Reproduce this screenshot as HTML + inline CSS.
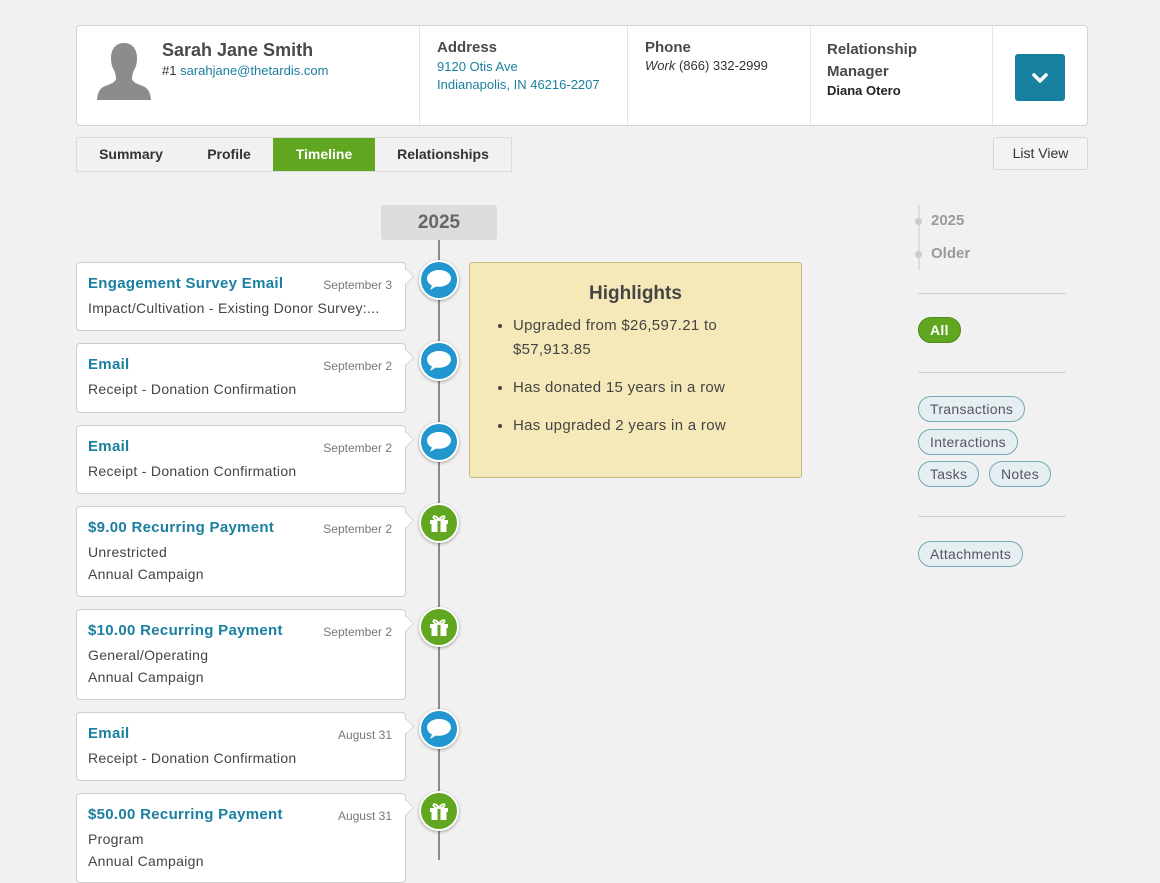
<!DOCTYPE html>
<html><head><meta charset="utf-8"><style>
*{box-sizing:border-box;margin:0;padding:0}
body{width:1160px;height:860px;overflow:hidden;background:#f1f1f1;font-family:"Liberation Sans",sans-serif;color:#444;position:relative}
.a{position:absolute}
.hdr{left:76px;top:25px;width:1012px;height:101px;background:#fff;border:1px solid #d4d4d4;border-radius:4px}
.col{position:absolute;top:0;height:99px;border-left:1px solid #e6e6e6}
.lbl{font-size:15px;font-weight:bold;color:#4a4a4a}
.link{color:#1a7fa0;font-size:13px}
.tabs{left:76px;top:137px;height:35px;border:1px solid #dcdcdc;background:#f1f1f1;display:flex}
.tab{font-size:14px;font-weight:bold;color:#333;line-height:33px;text-align:center}
.card{position:absolute;left:76px;width:330px;background:#fff;border:1px solid #cfcfcf;border-radius:4px;padding:12px 11px;letter-spacing:.3px}
.card:after{content:"";position:absolute;right:-7px;top:8px;width:10px;height:10px;background:#fff;border-top:1px solid #d6d6d6;border-right:1px solid #d6d6d6;transform:rotate(45deg)}
.ct{color:#1a7fa0;font-weight:bold;font-size:15px}
.cd{position:absolute;right:13px;top:15px;font-size:12px;color:#777;letter-spacing:0}
.cs{font-size:14px;color:#444;margin-top:5px;line-height:22px}
.cs2{font-size:14px;color:#444;line-height:22px}
.ic{position:absolute;left:419px;width:40px;height:40px;border-radius:50%;border:2px solid #fff;box-shadow:0 1px 3px rgba(0,0,0,.35);display:flex;align-items:center;justify-content:center}
.bl{background:#2297cf}.gr{background:#61a621}
.pill{position:absolute;height:26px;border:1px solid #74a9b8;border-radius:13px;background:#e6eef2;color:#556;font-size:14px;line-height:24px;padding:0 11px;letter-spacing:.3px}
.hr{position:absolute;left:918px;width:148px;border-top:1px solid #cfcfcf}
</style></head><body>
<div class="a hdr">
 <svg class="a" style="left:20px;top:15px" width="54" height="59" viewBox="0 0 54 59"><path d="M27 2c-9 0-13 7-13 15 0 5 1 9 3 12 1 3 2 5 2 8 0 3-3 5-8 7-6 2-10 4-11 15h54c-1-11-5-13-11-15-5-2-8-4-8-7 0-3 1-5 2-8 2-3 3-7 3-12 0-8-4-15-13-15z" fill="#8c8c8c"/></svg>
 <div class="a" style="left:85px;top:14px;font-size:18px;font-weight:bold;color:#4a4a4a">Sarah Jane Smith</div>
 <div class="a" style="left:85px;top:37px;font-size:13px;color:#333">#1 <span class="link">sarahjane@thetardis.com</span></div>
 <div class="col" style="left:342px;width:208px;padding:13px 17px"><div class="lbl">Address</div><div class="link" style="margin-top:2px;line-height:18px">9120 Otis Ave<br>Indianapolis, IN 46216-2207</div></div>
 <div class="col" style="left:550px;width:183px;padding:13px 17px"><div class="lbl">Phone</div><div style="font-size:13px;color:#333;margin-top:2px"><i>Work</i> (866) 332-2999</div></div>
 <div class="col" style="left:733px;width:182px;padding:13px 16px"><div class="lbl" style="line-height:22px">Relationship<br>Manager</div><div style="font-size:13px;font-weight:bold;color:#222">Diana Otero</div></div>
 <div class="col" style="left:915px;width:96px"></div>
 <div class="a" style="left:938px;top:28px;width:50px;height:47px;background:#17809f;border-radius:3px"><svg width="50" height="47"><path d="M19 21l6 6 6-6" stroke="#fff" stroke-width="3.5" fill="none" stroke-linecap="round" stroke-linejoin="round"/></svg></div>
</div>
<div class="a tabs"><div class="tab" style="width:108px">Summary</div><div class="tab" style="width:88px">Profile</div><div class="tab" style="width:102px;background:#61a621;color:#fff">Timeline</div><div class="tab" style="width:136px">Relationships</div></div>
<div class="a" style="left:993px;top:137px;width:95px;height:33px;border:1px solid #d6d6d6;border-radius:3px;background:#f3f3f3;font-size:14px;color:#333;text-align:center;line-height:31px">List View</div>

<div class="a" style="left:438px;top:238px;width:2px;height:622px;background:#8a8a8a"></div>
<div class="a" style="left:381px;top:205px;width:116px;height:35px;background:#dcdcdc;border-radius:3px;font-size:19px;font-weight:bold;color:#666;text-align:center;line-height:35px">2025</div>

<div class="card" style="top:262px;height:69px"><div class="ct">Engagement Survey Email</div><div class="cd">September 3</div><div class="cs">Impact/Cultivation - Existing Donor Survey:...</div></div>
<div class="card" style="top:343px;height:70px"><div class="ct">Email</div><div class="cd">September 2</div><div class="cs">Receipt - Donation Confirmation</div></div>
<div class="card" style="top:425px;height:69px"><div class="ct">Email</div><div class="cd">September 2</div><div class="cs">Receipt - Donation Confirmation</div></div>
<div class="card" style="top:506px;height:91px"><div class="ct">$9.00 Recurring Payment</div><div class="cd">September 2</div><div class="cs">Unrestricted</div><div class="cs2">Annual Campaign</div></div>
<div class="card" style="top:609px;height:91px"><div class="ct">$10.00 Recurring Payment</div><div class="cd">September 2</div><div class="cs">General/Operating</div><div class="cs2">Annual Campaign</div></div>
<div class="card" style="top:712px;height:69px"><div class="ct">Email</div><div class="cd">August 31</div><div class="cs">Receipt - Donation Confirmation</div></div>
<div class="card" style="top:793px;height:90px"><div class="ct">$50.00 Recurring Payment</div><div class="cd">August 31</div><div class="cs">Program</div><div class="cs2">Annual Campaign</div></div>

<svg width="0" height="0" style="position:absolute"><defs>
<symbol id="b" viewBox="0 0 28 24"><path d="M14 2C7 2 2 6 2 10.5c0 3 2 5.5 5 7l-2 4.5 6-3.5c1 .2 2 .3 3 .3 7 0 12-4 12-8.5S21 2 14 2z" fill="#fff"/></symbol>
<symbol id="g" viewBox="0 0 24 24"><path d="M3 9h18v4H3zM4.5 13h15v8h-15z" fill="#fff"/><rect x="10.5" y="9" width="3" height="12" fill="#61a621"/><path d="M12 9C10 5 6 4 6.5 6.5 7 8.5 10 9 12 9zM12 9c2-4 6-5 5.5-2.5C17 8.5 14 9 12 9z" fill="none" stroke="#fff" stroke-width="1.8"/></symbol>
</defs></svg>
<div class="ic bl" style="top:260px"><svg width="28" height="24"><use href="#b"/></svg></div>
<div class="ic bl" style="top:341px"><svg width="28" height="24"><use href="#b"/></svg></div>
<div class="ic bl" style="top:422px"><svg width="28" height="24"><use href="#b"/></svg></div>
<div class="ic gr" style="top:503px"><svg width="24" height="24"><use href="#g"/></svg></div>
<div class="ic gr" style="top:607px"><svg width="24" height="24"><use href="#g"/></svg></div>
<div class="ic bl" style="top:709px"><svg width="28" height="24"><use href="#b"/></svg></div>
<div class="ic gr" style="top:791px"><svg width="24" height="24"><use href="#g"/></svg></div>

<div class="a" style="left:469px;top:262px;width:333px;height:216px;background:#f5e9b9;border:1px solid #c9bb85;border-radius:3px">
 <div style="text-align:center;font-size:19px;font-weight:bold;color:#444;margin-top:20px">Highlights</div>
 <ul style="margin:9px 0 0 43px;width:240px;font-size:15px;color:#444;line-height:24px;letter-spacing:.3px">
  <li>Upgraded from $26,597.21 to $57,913.85</li>
  <li style="margin-top:14px">Has donated 15 years in a row</li>
  <li style="margin-top:14px">Has upgraded 2 years in a row</li>
 </ul>
</div>

<div class="a" style="left:918px;top:205px;width:2px;height:65px;background:#ddd"></div>
<div class="a" style="left:915px;top:218px;width:7px;height:7px;border-radius:50%;background:#ccc"></div>
<div class="a" style="left:915px;top:251px;width:7px;height:7px;border-radius:50%;background:#ccc"></div>
<div class="a" style="left:931px;top:212px;font-size:15px;font-weight:bold;color:#9a9a9a">2025</div>
<div class="a" style="left:931px;top:245px;font-size:15px;font-weight:bold;color:#9a9a9a">Older</div>
<div class="hr" style="top:293px"></div>
<div class="pill" style="left:918px;top:317px;background:#61a621;border-color:#4d8a1a;color:#fff;font-weight:bold;padding:0 11px">All</div>
<div class="hr" style="top:372px"></div>
<div class="pill" style="left:918px;top:396px">Transactions</div>
<div class="pill" style="left:918px;top:429px">Interactions</div>
<div class="pill" style="left:918px;top:461px">Tasks</div>
<div class="pill" style="left:989px;top:461px">Notes</div>
<div class="hr" style="top:516px"></div>
<div class="pill" style="left:918px;top:541px">Attachments</div>
</body></html>
